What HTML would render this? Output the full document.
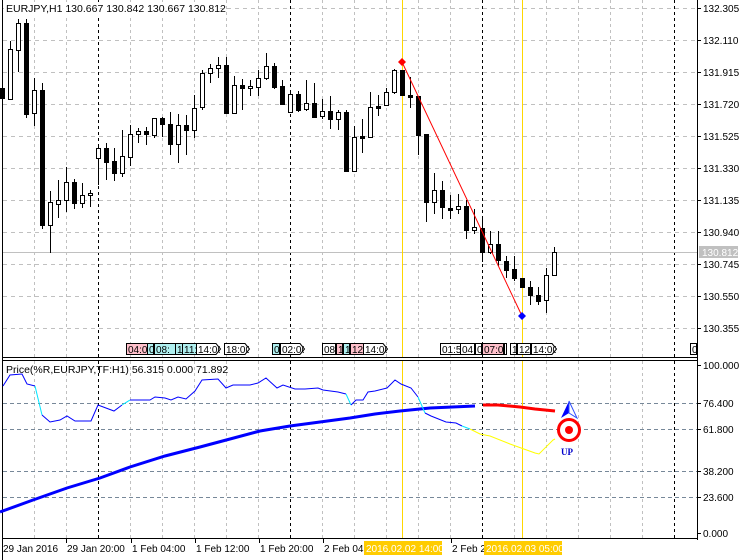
<!DOCTYPE html>
<html><head><meta charset="utf-8"><style>
html,body{margin:0;padding:0;background:#fff;}
svg{display:block;font-family:"Liberation Sans",sans-serif;font-size:10px;}
</style></head><body>
<svg id="s" width="750" height="560" viewBox="0 0 750 560" xmlns="http://www.w3.org/2000/svg">
<rect width="750" height="560" fill="#fff"/>
<g id="grid"></g>
<g id="cd"></g>
<g id="ov"></g>
</svg>
<script>
const NS="http://www.w3.org/2000/svg";
const s=document.getElementById('s');
function el(t,a,p,txt){const e=document.createElementNS(NS,t);for(const k in a)e.setAttribute(k,a[k]);if(txt!==undefined)e.textContent=txt;(p||s).appendChild(e);return e;}
const G=document.getElementById('grid'),C=document.getElementById('cd'),O=document.getElementById('ov');
// vertical grid
for(let x=34;x<697;x+=32){
 const day=(x===98||x===290||x===482||x===674);
 const c=day?'#000':'#c0c0c0';
 el('line',{x1:x+.5,y1:0,x2:x+.5,y2:358,stroke:c,'stroke-dasharray':'3,3'},G);
 el('line',{x1:x+.5,y1:361,x2:x+.5,y2:538,stroke:c,'stroke-dasharray':'3,3'},G);
}
// horizontal main grid
const pl=['132.305','132.110','131.915','131.720','131.525','131.330','131.135','130.940','130.745','130.550','130.355'];
pl.forEach((t,i)=>{const y=8+32*i;
 el('line',{x1:3,y1:y+.5,x2:697,y2:y+.5,stroke:'#c0c0c0','stroke-dasharray':'4,4'},G);
 el('line',{x1:697,y1:y+.5,x2:701,y2:y+.5,stroke:'#000'},G);
 el('text',{x:703,y:y+4,fill:'#000'},G,t);});
// current price line
el('line',{x1:3,y1:252.5,x2:697,y2:252.5,stroke:'#c0c0c0'},G);
el('rect',{x:699,y:246,width:39,height:12,fill:'#c0c0c0'},G);
el('text',{x:702,y:256,fill:'#fff'},G,'130.812');
// indicator grid
[[403,'76.400'],[429,'61.800'],[471,'38.200'],[497,'23.600']].forEach(([y,t])=>{
 el('line',{x1:3,y1:y+.5,x2:697,y2:y+.5,stroke:'#778899','stroke-dasharray':'4,3'},G);
 el('line',{x1:697,y1:y+.5,x2:701,y2:y+.5,stroke:'#000'},G);
 el('text',{x:703,y:y+4,fill:'#000'},G,t);});
el('line',{x1:697,y1:365.5,x2:701,y2:365.5,stroke:'#000'},G);el('text',{x:703,y:369},G,'100.000');
el('line',{x1:697,y1:533.5,x2:701,y2:533.5,stroke:'#000'},G);el('text',{x:703,y:537},G,'0.000');
// yellow verticals
[402,522].forEach(x=>{el('line',{x1:x+.5,y1:0,x2:x+.5,y2:358,stroke:'#ffd700'},G);el('line',{x1:x+.5,y1:361,x2:x+.5,y2:538,stroke:'#ffd700'},G);});
// candles
const d=[['b',88,98,86,100],['w',49,99,41,100],['w',23,50,19,72],['b',23,114,19,118],['w',90,113,78,126],['b',90,225,83,229],['w',202,225,191,253],['w',200,204,180,218],['w',182,200,167,212],['b',182,203,179,209],['w',195,203,183,208],['w',193,195,190,207],['w',148,158,145,185],['b',148,162,143,180],['b',161,173,148,181],['w',156,173,130,177],['w',134,157,125,166],['w',131,134,128,143],['b',131,134,127,145],['w',118,135,118,138],['b',118,124,117,137],['b',124,144,112,155],['w',125,144,114,163],['b',125,130,115,155],['w',108,130,95,138],['w',73,107,70,110],['w',68,73,64,83],['w',65,68,57,78],['b',65,113,57,114],['w',85,113,76,114],['b',85,88,79,110],['w',86,88,80,96],['w',78,87,70,96],['w',66,78,53,80],['b',66,87,63,89],['b',86,104,80,105],['w',94,112,92,113],['b',94,110,91,112],['w',103,109,80,111],['b',103,117,83,118],['w',111,116,99,119],['b',111,119,96,129],['w',112,119,110,130],['b',112,171,110,172],['w',137,171,126,172],['b',136,138,119,153],['w',107,137,92,138],['b',106,108,95,116],['w',92,105,88,106],['w',70,92,69,94],['b',70,95,70,96],['b',95,97,77,108],['b',96,135,96,155],['b',134,202,134,222],['w',190,202,173,214],['b',190,207,181,219],['b',208,210,195,219],['w',206,209,194,214],['b',206,230,200,239],['w',227,230,209,234],['b',228,252,218,262],['w',244,252,231,254],['b',244,260,231,266],['b',261,270,256,278],['b',269,278,256,281],['b',278,287,278,287],['b',287,295,281,305],['b',295,301,287,305],['w',275,300,268,313],['w',252,275,247,276]];
d.forEach((c,i)=>{const x=2+8*i;
 el('line',{x1:x+.5,y1:c[3],x2:x+.5,y2:c[4],stroke:'#000'},C);
 el('rect',{x:x-1.5,y:c[1]+.5,width:4,height:Math.max(1,c[2]-c[1]),fill:c[0]=='w'?'#fff':'#000',stroke:'#000'},C);
});
// red line & diamonds
el('line',{x1:402,y1:62,x2:522,y2:316,stroke:'#f00'},O);
el('polygon',{points:'402,58 406,62 402,66 398,62',fill:'#f00'},O);
el('polygon',{points:'522,312 526,316 522,320 518,316',fill:'#00f'},O);
// marker labels row
const L=[[126,147,'#ffc0cb','04:00'],[147,153,'#b0f0f0','0'],[154,175,'#b0f0f0','08:'],[175,182,'#b0f0f0','1'],[182,196,'#b0f0f0','11:0'],[196,220,'#fff','14:00',1],[224,249,'#fff','18:00',1],[272,279,'#b0f0f0','0'],[280,304,'#fff','02:00',1],[322,335,'#fff','08:'],[336,342,'#ffc0cb','1'],[343,349,'#b0f0f0','1'],[350,363,'#ffc0cb','12:'],[363,387,'#fff','14:00',1],[440,460,'#fff','01:50'],[460,474,'#fff','04:'],[475,481,'#fff','0'],[482,503,'#ffc0cb','07:00'],[504,506,'#fff',''],[510,516,'#fff','1'],[517,530,'#fff','12:'],[531,556,'#fff','14:00',1],[690,696,'#fff','0']];
L.forEach(l=>{const [a,b,f,t,ar]=l;
 if(ar){el('polygon',{points:`${a+.5},343.5 ${b-4},343.5 ${b+.5},349 ${b-4},354.5 ${a+.5},354.5`,fill:f,stroke:'#000'},O);}
 else el('rect',{x:a+.5,y:343.5,width:b-a,height:11,fill:f,stroke:'#000'},O);
 const sv=el('svg',{x:a+1,y:343,width:b-a-1,height:12},O);
 el('text',{x:1,y:10,'font-size':'10'},sv,t);});
// panel borders
el('line',{x1:2.5,y1:0,x2:2.5,y2:560,stroke:'#000'},O);
el('line',{x1:697.5,y1:0,x2:697.5,y2:540,stroke:'#000'},O);
el('line',{x1:2,y1:357.5,x2:698,y2:357.5,stroke:'#000'},O);
el('line',{x1:2,y1:360.5,x2:698,y2:360.5,stroke:'#000'},O);
el('line',{x1:2,y1:538.5,x2:698,y2:538.5,stroke:'#000'},O);
// header texts
el('rect',{x:4,y:2,width:216,height:13,fill:'#fff'},O);
el('text',{x:6,y:12,'font-size':'10.5'},O,'EURJPY,H1  130.667 130.842 130.667 130.812');
el('text',{x:6,y:373,'font-size':'10.5'},O,'Price(%R,EURJPY,TF:H1) 56.315 0.000 71.892');
// indicator lines
function pl2(pts,c,w){el('polyline',{points:pts.map(p=>p.join(',')).join(' '),fill:'none',stroke:c,'stroke-width':w},O);}
pl2([[0,512],[33,500],[67,488],[100,478],[130,467],[165,456],[200,447],[230,439],[260,431],[290,426],[320,422],[350,418],[375,414],[400,411],[430,408],[475,406]],'#0000ff',3);
pl2([[483,405],[498,405],[520,407],[535,409],[555,411]],'#f00',3);
pl2([[3,386],[10,375],[22,374],[27,384],[35,386]],'#0000ff',1);
pl2([[35,386],[42,415]],'#00e5ff',1);
pl2([[42,415],[50,422],[60,420],[67,416],[75,421],[91,421],[98,405],[114,411],[122,405]],'#0000ff',1);
pl2([[122,405],[130,400]],'#00e5ff',1);
pl2([[130,400],[150,400],[155,397],[165,398],[171,400],[178,397],[186,399],[195,391],[202,380],[218,379],[226,388],[233,385],[250,385],[258,383],[266,378],[277,388],[283,385],[295,389],[305,389],[318,388],[323,390],[338,392],[346,394]],'#0000ff',1);
pl2([[346,394],[351,405]],'#00e5ff',1);
pl2([[351,405],[356,400],[363,400],[368,392],[375,391],[387,388],[395,380],[401,384],[411,388],[418,397]],'#0000ff',1);
pl2([[418,397],[425,413]],'#00e5ff',1);
pl2([[425,413],[431,416],[446,422],[456,423],[462,426]],'#0000ff',1);
pl2([[462,426],[470,429]],'#00e5ff',1);
pl2([[470,429],[480,434],[490,436],[510,444],[535,453],[539,454],[553,440],[555,439]],'#ffff00',1);
// signal icon
el('polygon',{points:'569,401 561,418 569,413',fill:'#0000ff'},O);
el('polygon',{points:'569,401 577,418 569,413',fill:'#fff',stroke:'#3050ff'},O);
el('circle',{cx:569,cy:430,r:10.5,fill:'#fff',stroke:'#f00','stroke-width':3},O);
el('circle',{cx:569,cy:430,r:4,fill:'#f00'},O);
el('text',{x:561,y:455,'font-family':'Liberation Serif,serif','font-weight':'bold','font-size':'9',fill:'#0000cc'},O,'UP');
// time axis
[[2,'29 Jan 2016'],[66,'29 Jan 20:00'],[131,'1 Feb 04:00'],[195,'1 Feb 12:00'],[259,'1 Feb 20:00'],[323,'2 Feb 04:00'],[451,'2 Feb 20:00']].forEach(([x,t])=>{
 el('line',{x1:x+.5,y1:539,x2:x+.5,y2:543,stroke:'#000'},O);
 el('text',{x:x+1,y:552,'font-size':'10'},O,t);});
el('rect',{x:364,y:541,width:78,height:14,fill:'#ffcc00'},O);
el('text',{x:366,y:552,fill:'#fff','font-size':'10'},O,'2016.02.02 14:00');
el('rect',{x:484,y:541,width:78,height:14,fill:'#ffcc00'},O);
el('text',{x:486,y:552,fill:'#fff','font-size':'10'},O,'2016.02.03 05:00');
</script>
</body></html>
